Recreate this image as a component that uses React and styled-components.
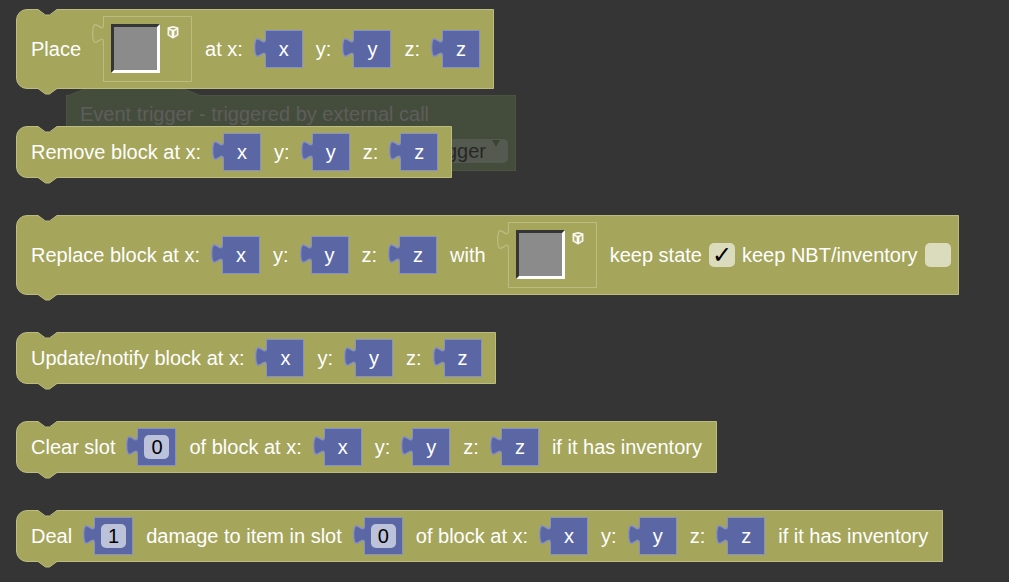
import React from "react";
import styled, { createGlobalStyle } from "styled-components";

const OLIVE = "#a5a55b";
const OLIVE_EDGE = "#bcbc82";
const BLUE = "#5b67a5";
const BLUE_EDGE = "#8791c6";
const CANVAS = "#353535";
const GHOST = "#444d3b";
const GHOST_EDGE = "#4b5443";

const GlobalStyle = createGlobalStyle`
  body {
    margin: 0;
    background: ${CANVAS};
    font-family: "Liberation Sans", Arial, sans-serif;
    font-size: 20px;
    line-height: 24px;
  }
  *, *::before, *::after { box-sizing: border-box; }
`;

const Workspace = styled.main`
  position: relative;
  min-height: 100vh;
  overflow: hidden;
  background: ${CANVAS};
`;

const Flyout = styled.div`
  position: relative;
  display: flex;
  flex-direction: column;
  align-items: flex-start;
  gap: 37px;
  padding: 9px 16px 20px;
`;

const Block = styled.section`
  position: relative;
  display: flex;
  align-items: center;
  min-height: 52px;
  padding: 6px 0 6px 14px;
  border: 1px solid ${OLIVE_EDGE};
  border-radius: 11px 0 0 11px;
  background: ${OLIVE};
  color: #fff;
  white-space: nowrap;
`;

const NotchSvg = styled.svg`
  position: absolute;
  left: 20px;
  ${(p) => (p.$bottom ? "bottom: -7px;" : "top: -1px;")}
  display: block;
`;

const Value = styled.span`
  position: relative;
  display: flex;
  align-items: center;
  justify-content: center;
  width: ${(p) => (p.$number ? 39 : 38)}px;
  height: 38px;
  margin: 0 13px 0 22px;
  border: 1px solid ${BLUE_EDGE};
  background: ${BLUE};
`;

const Socket = styled.span`
  position: relative;
  display: flex;
  align-items: flex-start;
  gap: 7px;
  width: 89px;
  height: 66px;
  margin: 0 13px 0 22px;
  padding: 7px;
  border: 1px solid ${OLIVE_EDGE};
`;

const TabSvg = styled.svg`
  position: absolute;
  left: -12px;
  top: 5px;
  display: block;
`;

const ItemButton = styled.button`
  width: 49px;
  height: 49px;
  padding: 0;
  border: 3px solid;
  border-color: #353535 #fff #fff #353535;
  background: #8b8b8b;
`;

const NumberField = styled.input`
  width: 25px;
  height: 24px;
  padding: 0;
  border: 0;
  border-radius: 5px;
  background: #bdc2db;
  color: #000;
  font: inherit;
  text-align: center;
`;

const Tail = styled.span`
  margin-right: 14px;
`;

const CheckLabel = styled.label`
  display: flex;
  align-items: center;
  gap: 7px;
  margin-right: 7px;
`;

const CheckBox = styled.input`
  appearance: none;
  display: flex;
  align-items: center;
  justify-content: center;
  width: 26px;
  height: 24px;
  margin: 0;
  border-radius: 5px;
  background: #dbdbbd;
  color: #000;
  font: 24px/24px "DejaVu Sans", sans-serif;
  &:checked::before { content: "✓"; }
`;

const GhostBlock = styled.section`
  position: absolute;
  left: 66px;
  top: 95px;
  display: flex;
  flex-direction: column;
  gap: 13px;
  min-width: 450px;
  height: 76px;
  padding: 6px 7px 7px 13px;
  border: 1px solid ${GHOST_EDGE};
  background: ${GHOST};
  color: #5d5e5c;
`;

const HatSvg = styled.svg`
  position: absolute;
  left: -1px;
  top: -13px;
  display: block;
`;

const Picker = styled.span`
  position: relative;
  align-self: flex-end;
  display: flex;
`;

const Select = styled.select`
  appearance: none;
  height: 24px;
  padding: 0 22px 0 7px;
  border: 0;
  border-radius: 5px;
  background: #555a50;
  color: #272727;
  font: inherit;
`;

const ArrowSvg = styled.svg`
  position: absolute;
  right: 8px;
  top: 1px;
`;

function Notches() {
  return (
    <>
      <NotchSvg width="22" height="7" viewBox="0 0 22 7" aria-hidden="true">
        <path d="M0.5 0H20.5L13 6H8Z" fill={CANVAS} />
        <path d="M0 0.5H1L8.5 6H12.5L20 0.5H21" fill="none" stroke={OLIVE_EDGE} />
      </NotchSvg>
      <NotchSvg $bottom width="22" height="7" viewBox="0 0 22 7" aria-hidden="true">
        <path d="M1 0H20V0.5L12.5 6H8.5L1 0.5Z" fill={OLIVE} />
        <path d="M0 0.5H1L8.5 6H12.5L20 0.5H21" fill="none" stroke={OLIVE_EDGE} />
        <path d="M2 0.5H19" stroke={OLIVE} />
      </NotchSvg>
    </>
  );
}

function Tab({ fill, edge }) {
  return (
    <TabSvg width="12" height="24" viewBox="0 0 12 24" aria-hidden="true">
      <path
        d="M12 1.5H11.5C11.5 15 0.7 -9.2 0.7 11.5S11.5 8 11.5 21.5H12Z"
        fill={fill}
      />
      <path d="M11.5 5V18" stroke={fill} />
      <path
        d="M11.5 0V1.5C11.5 15 0.7 -9.2 0.7 11.5S11.5 8 11.5 21.5V24"
        fill="none"
        stroke={edge}
        strokeWidth="1.3"
      />
    </TabSvg>
  );
}

function Variable({ name }) {
  return (
    <Value>
      <Tab fill={BLUE} edge={BLUE_EDGE} />
      {name}
    </Value>
  );
}

function NumberValue({ value, label }) {
  return (
    <Value $number>
      <Tab fill={BLUE} edge={BLUE_EDGE} />
      <NumberField aria-label={label} defaultValue={value} />
    </Value>
  );
}

function ItemSocket() {
  return (
    <Socket>
      <Tab fill={OLIVE} edge={OLIVE_EDGE} />
      <ItemButton type="button" aria-label="Select block" />
      <svg width="12" height="16" viewBox="0 0 12 16" aria-hidden="true">
        <path
          d="M6 2.8L10.8 4V11L6 13.8L1.2 11V4Z"
          fill="#fff"
          fillOpacity="0.4"
          stroke="#fff"
          strokeOpacity="0.9"
          strokeWidth="1.4"
          strokeLinejoin="round"
        />
        <path d="M1.4 4.4L6 7L10.6 4.4" fill="none" stroke="#fff" strokeWidth="1.2" />
        <path d="M6 7V13" stroke="#fff" strokeWidth="2" />
        <path d="M3.3 7.2V10.4M8.7 7.2V10.4M4.4 4.6H7.6" stroke={OLIVE} />
      </svg>
    </Socket>
  );
}

function Coordinates() {
  return (
    <>
      <Variable name="x" />
      <span>y:</span>
      <Variable name="y" />
      <span>z:</span>
      <Variable name="z" />
    </>
  );
}

export default function App() {
  return (
    <Workspace>
      <GlobalStyle />
      <GhostBlock>
        <HatSvg width="138" height="14" viewBox="0 0 138 14" aria-hidden="true">
          <path d="M0.5 14V13.5C41 -6.5 95 -6.5 136 13.5V14Z" fill={GHOST} />
          <path d="M0.5 13.5C41 -6.5 95 -6.5 136 13.5" fill="none" stroke={GHOST_EDGE} />
        </HatSvg>
        <span>Event trigger - triggered by external call</span>
        <Picker>
          <Select aria-label="Trigger">
            <option>No additional trigger</option>
          </Select>
          <ArrowSvg width="8" height="7" viewBox="0 0 8 7" aria-hidden="true">
            <path d="M0 0H8L4 7Z" fill="#3c4534" />
          </ArrowSvg>
        </Picker>
      </GhostBlock>
      <Flyout>
        <Block>
          <Notches />
          <span>Place</span>
          <ItemSocket />
          <span>at x:</span>
          <Coordinates />
        </Block>
        <Block>
          <Notches />
          <span>Remove block at x:</span>
          <Coordinates />
        </Block>
        <Block>
          <Notches />
          <span>Replace block at x:</span>
          <Coordinates />
          <span>with</span>
          <ItemSocket />
          <CheckLabel>
            keep state
            <CheckBox type="checkbox" defaultChecked />
          </CheckLabel>
          <CheckLabel>
            keep NBT/inventory
            <CheckBox type="checkbox" />
          </CheckLabel>
        </Block>
        <Block>
          <Notches />
          <span>Update/notify block at x:</span>
          <Coordinates />
        </Block>
        <Block>
          <Notches />
          <span>Clear slot</span>
          <NumberValue value="0" label="Slot" />
          <span>of block at x:</span>
          <Coordinates />
          <Tail>if it has inventory</Tail>
        </Block>
        <Block>
          <Notches />
          <span>Deal</span>
          <NumberValue value="1" label="Damage" />
          <span>damage to item in slot</span>
          <NumberValue value="0" label="Slot" />
          <span>of block at x:</span>
          <Coordinates />
          <Tail>if it has inventory</Tail>
        </Block>
      </Flyout>
    </Workspace>
  );
}
